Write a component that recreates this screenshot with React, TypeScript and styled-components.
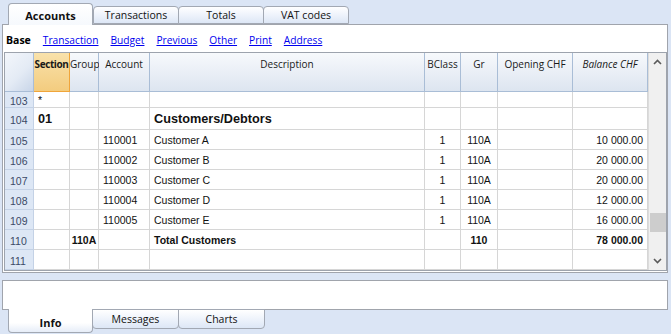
import React from "react"
import styled, { createGlobalStyle } from "styled-components"

const GlobalStyle = createGlobalStyle`
    html, body {
        margin: 0;
        padding: 0;
        background: #dbe5f5;
        width: 671px;
        height: 334px;
        overflow: hidden;
    }
`

const COLS = "29px 36px 29px 51px 275px 36px 37px 75px 75px"

type Row = {
    num: number
    section?: string
    group?: string
    account?: string
    description?: string
    bclass?: string
    gr?: string
    opening?: string
    balance?: string
    kind?: "title" | "total" | "plain"
    height: number
}

const rows: Row[] = [
    { num: 103, section: "*", height: 16 },
    { num: 104, section: "01", description: "Customers/Debtors", kind: "title", height: 22 },
    { num: 105, account: "110001", description: "Customer A", bclass: "1", gr: "110A", balance: "10 000.00", height: 20 },
    { num: 106, account: "110002", description: "Customer B", bclass: "1", gr: "110A", balance: "20 000.00", height: 20 },
    { num: 107, account: "110003", description: "Customer C", bclass: "1", gr: "110A", balance: "20 000.00", height: 20 },
    { num: 108, account: "110004", description: "Customer D", bclass: "1", gr: "110A", balance: "12 000.00", height: 20 },
    { num: 109, account: "110005", description: "Customer E", bclass: "1", gr: "110A", balance: "16 000.00", height: 20 },
    { num: 110, group: "110A", description: "Total Customers", gr: "110", balance: "78 000.00", kind: "total", height: 20 },
    { num: 111, height: 20 },
]

const topTabs = ["Accounts", "Transactions", "Totals", "VAT codes"]
const links = ["Transaction", "Budget", "Previous", "Other", "Print", "Address"]
const bottomTabs = ["Info", "Messages", "Charts"]

export default function App() {
    return (
        <Page>
            <GlobalStyle />
            <TabBar>
                {topTabs.map((t, i) => (
                    <Tab key={t} $active={i === 0}>{t}</Tab>
                ))}
            </TabBar>
            <Panel>
                <LinkRow>
                    <Base>Base</Base>
                    {links.map(l => <Link key={l} href="#">{l}</Link>)}
                </LinkRow>
                <Grid>
                    <Table>
                        <HeaderRow>
                            <Corner />
                            <HeadCell $selected $bold>Section</HeadCell>
                            <HeadCell>Group</HeadCell>
                            <HeadCell>Account</HeadCell>
                            <HeadCell>Description</HeadCell>
                            <HeadCell>BClass</HeadCell>
                            <HeadCell>Gr</HeadCell>
                            <HeadCell>Opening CHF</HeadCell>
                            <HeadCell $italic>Balance CHF</HeadCell>
                        </HeaderRow>
                        {rows.map(r => (
                            <BodyRow key={r.num} $height={r.height}>
                                <NumCell>{r.num}</NumCell>
                                <Cell $big={r.kind === "title"} $top={r.num === 103}>{r.section}</Cell>
                                <Cell $bold={r.kind === "total"} $align="center">{r.group}</Cell>
                                <Cell>{r.account}</Cell>
                                <Cell $big={r.kind === "title"} $bold={r.kind === "total"}>{r.description}</Cell>
                                <Cell $align="center">{r.bclass}</Cell>
                                <Cell $align="center" $bold={r.kind === "total"}>{r.gr}</Cell>
                                <Cell $align="right">{r.opening}</Cell>
                                <Cell $align="right" $bold={r.kind === "total"}>{r.balance}</Cell>
                            </BodyRow>
                        ))}
                    </Table>
                    <ScrollBar>
                        <Arrow>
                            <svg width="9" height="6" viewBox="0 0 9 6">
                                <polyline points="1,5 4.5,1.5 8,5" fill="none" stroke="#5a5a5a" strokeWidth="1.6" />
                            </svg>
                        </Arrow>
                        <Track>
                            <Thumb />
                        </Track>
                        <Arrow>
                            <svg width="9" height="6" viewBox="0 0 9 6">
                                <polyline points="1,1 4.5,4.5 8,1" fill="none" stroke="#5a5a5a" strokeWidth="1.6" />
                            </svg>
                        </Arrow>
                    </ScrollBar>
                </Grid>
            </Panel>
            <InfoPanel />
            <BottomTabBar>
                {bottomTabs.map((t, i) => (
                    <BottomTab key={t} $active={i === 0}>{t}</BottomTab>
                ))}
            </BottomTabBar>
        </Page>
    )
}

const Page = styled.div`
    width: 671px;
    height: 334px;
    font-family: "Liberation Sans", Arial, sans-serif;
    color: #000;
`

const TabBar = styled.div`
    height: 24px;
    display: flex;
    align-items: flex-end;
    padding-left: 8px;
    position: relative;
    z-index: 1;
`

const Tab = styled.div<{ $active?: boolean }>`
    box-sizing: border-box;
    width: ${p => p.$active ? 85 : 86}px;
    height: ${p => p.$active ? 22 : 18}px;
    margin-bottom: ${p => p.$active ? -1 : 0}px;
    margin-right: ${p => p.$active ? 0 : -1}px;
    border: 1px solid #a2a8b3;
    border-bottom: ${p => p.$active ? "none" : "1px solid #a2a8b3"};
    border-radius: 4px 4px 0 0;
    background: ${p => p.$active
        ? "linear-gradient(#ffffff, #f6f9fd)"
        : "linear-gradient(#ffffff 0%, #eef3fb 50%, #dde7f6 100%)"};
    font-family: "Open Sans", "Liberation Sans", sans-serif;
    font-size: ${p => p.$active ? 11 : 10.5}px;
    font-weight: ${p => p.$active ? 700 : 400};
    display: flex;
    align-items: center;
    justify-content: center;
    padding-top: ${p => p.$active ? 1 : 0}px;
    color: #111;
`

const Panel = styled.div`
    box-sizing: border-box;
    margin-left: 2px;
    width: 666px;
    height: 249px;
    border: 1px solid #a0a4ac;
    background: #fff;
    padding: 0 0 1px 1px;
`

const LinkRow = styled.div`
    height: 27px;
    display: flex;
    align-items: center;
    gap: 12px;
    padding-left: 2px;
    padding-top: 2px;
    box-sizing: border-box;
    font-family: "Open Sans", "Liberation Sans", sans-serif;
    font-size: 10.2px;
`

const Base = styled.span`
    font-weight: 700;
    font-size: 10.5px;
`

const Link = styled.a`
    color: #0000ee;
    text-decoration: underline;
`

const Grid = styled.div`
    display: flex;
    border: 1px solid #9da3ad;
    height: 219px;
    box-sizing: border-box;
`

const Table = styled.div`
    width: 643px;
    display: flex;
    flex-direction: column;
`

const HeaderRow = styled.div`
    display: grid;
    grid-template-columns: ${COLS};
    height: 39px;
`

const Corner = styled.div`
    box-sizing: border-box;
    border-right: 1px solid #a9bdd6;
    border-bottom: 1px solid #a9bdd6;
    background: linear-gradient(135deg, #f3f6fb 0%, #e4ebf5 55%, #c8d5e8 100%);
`

const HeadCell = styled.div<{ $selected?: boolean; $bold?: boolean; $italic?: boolean }>`
    box-sizing: border-box;
    border-right: 1px solid ${p => p.$selected ? "#f0a53a" : "#a9bdd6"};
    border-bottom: 1px solid ${p => p.$selected ? "#f0a53a" : "#a9bdd6"};
    background: ${p => p.$selected
        ? "linear-gradient(#f9e2ab, #f3cc7f)"
        : "linear-gradient(#f7f9fc, #dde5f0)"};
    font-family: "Open Sans", "Liberation Sans", sans-serif;
    font-size: 10px;
    font-weight: ${p => p.$bold ? 700 : 400};
    font-style: ${p => p.$italic ? "italic" : "normal"};
    text-align: center;
    padding-top: 4px;
    white-space: nowrap;
    overflow: visible;
    letter-spacing: ${p => p.$bold ? "-0.4px" : "0"};
    color: #1a1a1a;
`

const BodyRow = styled.div<{ $height: number }>`
    display: grid;
    grid-template-columns: ${COLS};
    height: ${p => p.$height}px;
`

const NumCell = styled.div`
    box-sizing: border-box;
    background: #dde7f5;
    border-right: 1px solid #c4d2e6;
    border-bottom: 1px solid #c4d2e6;
    font-size: 10.5px;
    color: #3b4a66;
    display: flex;
    align-items: center;
    padding-left: 5px;
    padding-top: 2px;
`

const Cell = styled.div<{ $align?: "left" | "center" | "right"; $bold?: boolean; $big?: boolean; $top?: boolean }>`
    box-sizing: border-box;
    border-right: 1px solid #d6d6d6;
    border-bottom: 1px solid #d6d6d6;
    font-size: ${p => p.$big ? 12.7 : 10.5}px;
    font-weight: ${p => p.$bold || p.$big ? 700 : 400};
    display: flex;
    align-items: ${p => p.$top ? "flex-start" : "center"};
    justify-content: ${p => p.$align === "right" ? "flex-end" : p.$align === "center" ? "center" : "flex-start"};
    padding: ${p => p.$top ? "2px 4px 0" : "0 4px"};
    white-space: nowrap;
    color: #111;
`

const ScrollBar = styled.div`
    width: 18px;
    background: #f0f0f0;
    border-left: 1px solid #dcdcdc;
    box-sizing: border-box;
    display: flex;
    flex-direction: column;
`

const Arrow = styled.div`
    height: 18px;
    display: flex;
    align-items: center;
    justify-content: center;
`

const Track = styled.div`
    flex: 1;
    position: relative;
`

const Thumb = styled.div`
    position: absolute;
    left: 1px;
    right: 0;
    top: 142px;
    height: 19px;
    background: #cdcdcd;
`

const InfoPanel = styled.div`
    box-sizing: border-box;
    margin: 7px 0 0 2px;
    width: 666px;
    height: 30px;
    border: 1px solid #a0a4ac;
    background: #fff;
`

const BottomTabBar = styled.div`
    display: flex;
    align-items: flex-start;
    padding-left: 8px;
    margin-top: -1px;
`

const BottomTab = styled.div<{ $active?: boolean }>`
    box-sizing: border-box;
    width: ${p => p.$active ? 85 : 87}px;
    height: ${p => p.$active ? 24 : 20}px;
    margin-right: -1px;
    border: 1px solid #a2a8b3;
    border-top: ${p => p.$active ? "none" : "1px solid #a2a8b3"};
    border-radius: 0 0 4px 4px;
    background: ${p => p.$active
        ? "linear-gradient(#ffffff 60%, #e6edf8)"
        : "linear-gradient(#ffffff 0%, #eef3fb 50%, #dde7f6 100%)"};
    font-family: "Open Sans", "Liberation Sans", sans-serif;
    font-size: ${p => p.$active ? 11 : 10.5}px;
    font-weight: ${p => p.$active ? 700 : 400};
    display: flex;
    align-items: center;
    justify-content: center;
    padding-top: ${p => p.$active ? 4 : 0}px;
    position: relative;
    z-index: ${p => p.$active ? 1 : 0};
    color: #111;
`
